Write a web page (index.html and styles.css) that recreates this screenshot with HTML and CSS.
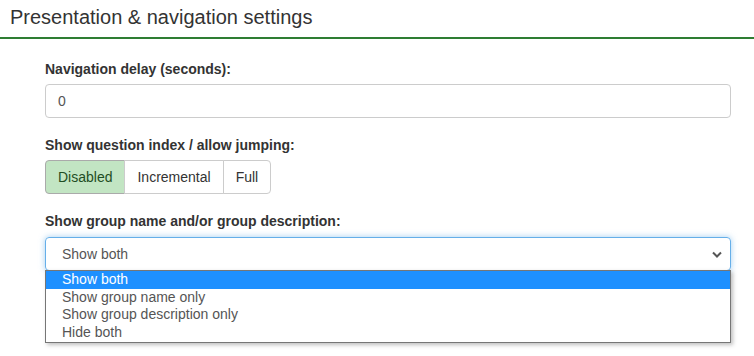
FILE: index.html
```html
<!DOCTYPE html>
<html lang="en">
<head>
    <meta charset="UTF-8">
    <title>Presentation &amp; navigation settings</title>
    <link rel="stylesheet" href="styles.css">
</head>
<body>

<div class="panel-heading">Presentation &amp; navigation settings</div>

<div class="panel-body">
    <div class="form-group">
        <label class="control-label">Navigation delay (seconds):</label>
        <div class="form-control">0</div>
    </div>

    <div class="form-group">
        <label class="control-label">Show question index / allow jumping:</label>
        <div class="btn-group">
            <span class="btn active">Disabled</span>
            <span class="btn">Incremental</span>
            <span class="btn">Full</span>
        </div>
    </div>

    <div class="form-group">
        <label class="control-label">Show group name and/or group description:</label>
        <div class="select-wrap">
            <div class="form-control select focused">
                <span>Show both</span>
                <svg class="caret" width="10" height="7" viewBox="0 0 10 7">
                    <path d="M1 1.5 L5 5.5 L9 1.5" fill="none" stroke="#555" stroke-width="2"/>
                </svg>
            </div>
            <ul class="dropdown">
                <li class="selected">Show both</li>
                <li>Show group name only</li>
                <li>Show group description only</li>
                <li>Hide both</li>
            </ul>
        </div>
    </div>
</div>

</body>
</html>
```

FILE: styles.css
```css
html, body {
    min-height: 100vh;
}
body {
    margin: 0;
    background: #fff;
    font-family: "Liberation Sans", Arial, sans-serif;
    color: #333;
}
.panel-heading {
    height: 37px;
    padding: 0 10px;
    font-size: 20px;
    line-height: 34px;
    border-bottom: 2px solid #2e7d32;
}
.panel-body {
    padding: 20px 23px 0 45px;
}
.form-group {
    margin-bottom: 17px;
}
.control-label {
    display: block;
    font-size: 14px;
    font-weight: bold;
    line-height: 20px;
    margin-bottom: 5px;
}
.form-control {
    box-sizing: border-box;
    height: 34px;
    padding: 0 12px;
    font-size: 14px;
    line-height: 32px;
    color: #555;
    border: 1px solid #ccc;
    border-radius: 4px;
}
.btn-group {
    display: flex;
}
.btn {
    box-sizing: border-box;
    height: 34px;
    padding: 0 12px;
    font-size: 14px;
    line-height: 32px;
    color: #333;
    border: 1px solid #ccc;
    margin-left: -1px;
    background: #fff;
}
.btn:first-child {
    margin-left: 0;
    border-radius: 4px 0 0 4px;
}
.btn:last-child {
    border-radius: 0 4px 4px 0;
}
.btn.active {
    background: #c2e5c3;
    color: #1f4d24;
    border-color: #aaa;
}
.select-wrap {
    position: relative;
    padding-top: 1px;
}
.select {
    display: flex;
    justify-content: space-between;
    align-items: center;
    padding: 0 8px 0 16px;
}
.select.focused {
    border-color: #66afe9;
    box-shadow: 0 0 6px rgba(102, 175, 233, 0.6);
}
.dropdown {
    position: absolute;
    top: 34px;
    left: 0;
    right: 0;
    z-index: 2;
    margin: 0;
    padding: 0 0 1px;
    list-style: none;
    background: #fff;
    border: 1px solid #767676;
    box-shadow: 2px 2px 4px rgba(0, 0, 0, 0.25);
    font-size: 14px;
    line-height: 17.5px;
    color: #555;
}
.dropdown li {
    padding-left: 16px;
}
.dropdown li.selected {
    background: #1e90ff;
    color: #fff;
}
```
